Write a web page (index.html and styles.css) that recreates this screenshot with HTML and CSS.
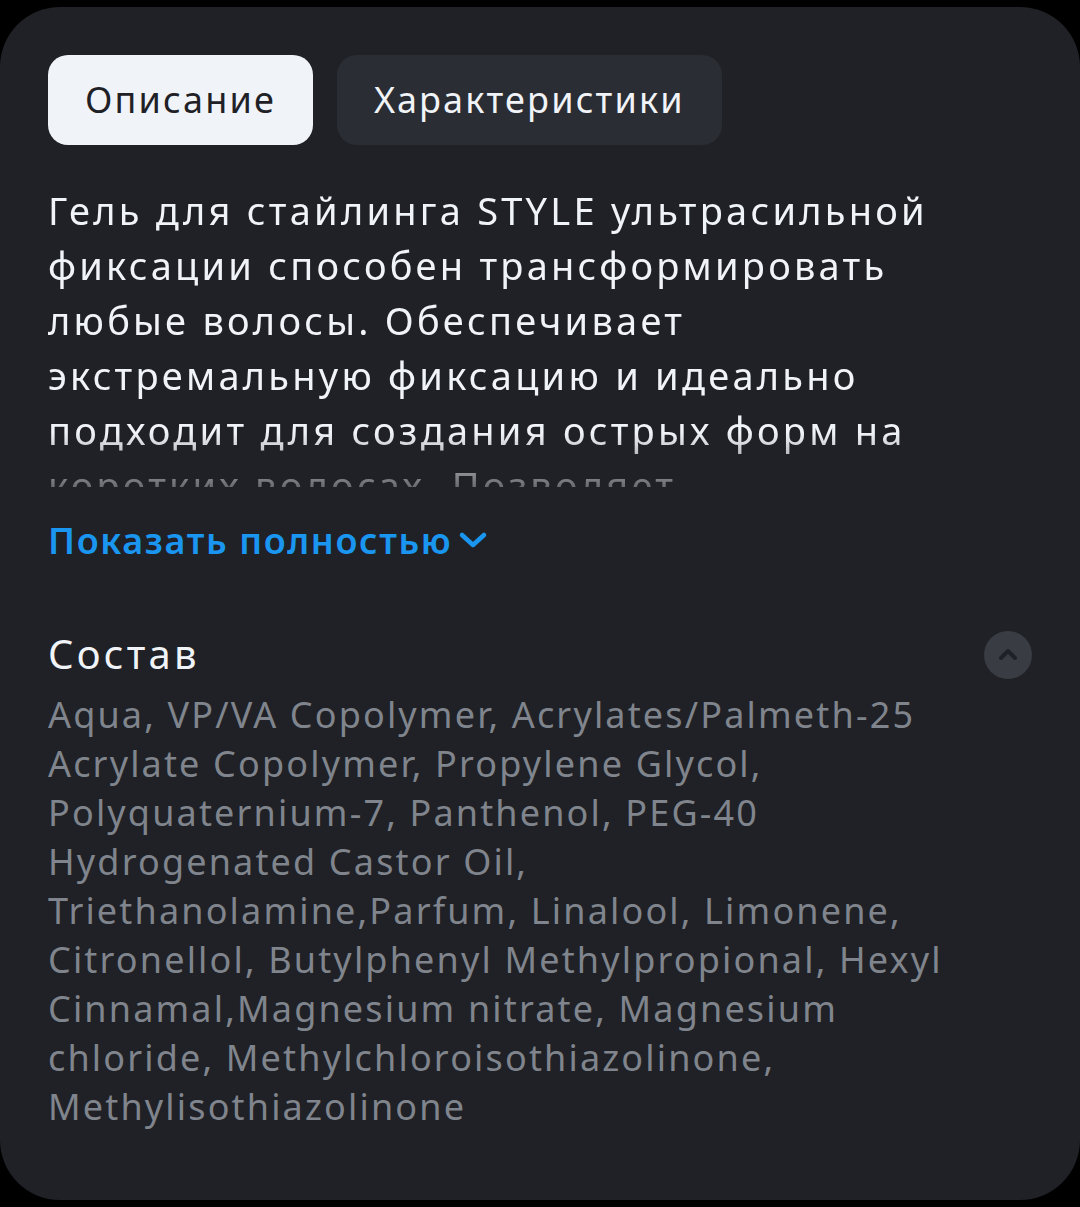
FILE: index.html
```html
<!DOCTYPE html>
<html lang="ru">
<head>
    <meta charset="UTF-8">
    <title>Описание</title>
    <link rel="stylesheet" href="styles.css">
</head>
<body>
    <div class="card">
        <div class="tabs">
            <span class="tab current">Описание</span>
            <span class="tab">Характеристики</span>
        </div>
        <div class="desc">
            Гель для стайлинга STYLE ультрасильной фиксации способен трансформировать любые волосы. Обеспечивает экстремальную фиксацию и идеально подходит для создания острых форм на коротких волосах. Позволяет моделировать пряди и создавать эффект мокрых волос.
        </div>
        <a class="more" href="">Показать полностью
            <svg width="34" height="22" viewBox="0 0 34 22"><path d="M6 6l11 10 11-10" fill="none" stroke="#1a96f0" stroke-width="4.5" stroke-linecap="round" stroke-linejoin="round"/></svg>
        </a>
        <div class="compHead">
            <span class="compTitle">Состав</span>
            <span class="toggle">
                <svg width="24" height="16" viewBox="0 0 24 16"><path d="M5 11l7-7 7 7" fill="none" stroke="#1f2126" stroke-width="4" stroke-linecap="round" stroke-linejoin="round"/></svg>
            </span>
        </div>
        <div class="comp">
            Aqua, VP/VA Copolymer, Acrylates/Palmeth-25 Acrylate Copolymer, Propylene Glycol, Polyquaternium-7, Panthenol, PEG-40 Hydrogenated Castor Oil, Triethanolamine,Parfum, Linalool, Limonene, Citronellol, Butylphenyl Methylpropional, Hexyl Cinnamal,Magnesium nitrate, Magnesium chloride, Methylchloroisothiazolinone, Methylisothiazolinone
        </div>
    </div>
</body>
</html>
```
FILE: styles.css
```css
*{
    margin:0;
    padding:0;
    box-sizing:border-box;
}
body{
    background:#000;
    font-family:"Noto Sans", sans-serif;
}
.card{
    margin-top:7px;
    height:1193px;
    border-radius:60px;
    background:#1f2126;
    padding:48px;
    color:#f0f3f7;
}
.tabs{
    display:flex;
    gap:24px;
}
.tab{
    height:90px;
    line-height:90px;
    padding:0 37px;
    border-radius:20px;
    background:#2a2d33;
    font-size:36px;
    letter-spacing:0.06em;
    color:#f0f3f7;
}
.tab.current{
    background:#f0f3f8;
    color:#1f2126;
}
.desc{
    margin-top:38px;
    font-size:38px;
    letter-spacing:0.085em;
    line-height:55px;
    height:304px;
    overflow:hidden;
    width:900px;
    -webkit-mask-image:linear-gradient(to bottom, #000 250px, rgba(0,0,0,.35) 304px);
    mask-image:linear-gradient(to bottom, #000 250px, rgba(0,0,0,.35) 304px);
}
.more{
    display:flex;
    align-items:center;
    gap:4px;
    margin-top:28px;
    height:50px;
    font-size:36px;
    letter-spacing:0.045em;
    font-weight:600;
    color:#1a96f0;
    text-decoration:none;
}
.compHead{
    display:flex;
    align-items:center;
    justify-content:space-between;
    margin-top:63px;
    height:50px;
}
.compTitle{
    font-size:40px;
    letter-spacing:0.08em;
}
.toggle{
    width:48px;
    height:48px;
    margin-top:4px;
    border-radius:50%;
    background:#393c42;
    display:flex;
    align-items:center;
    justify-content:center;
}
.comp{
    margin-top:12px;
    font-size:36px;
    letter-spacing:0.06em;
    line-height:49px;
    color:#80858d;
    width:930px;
}
```
